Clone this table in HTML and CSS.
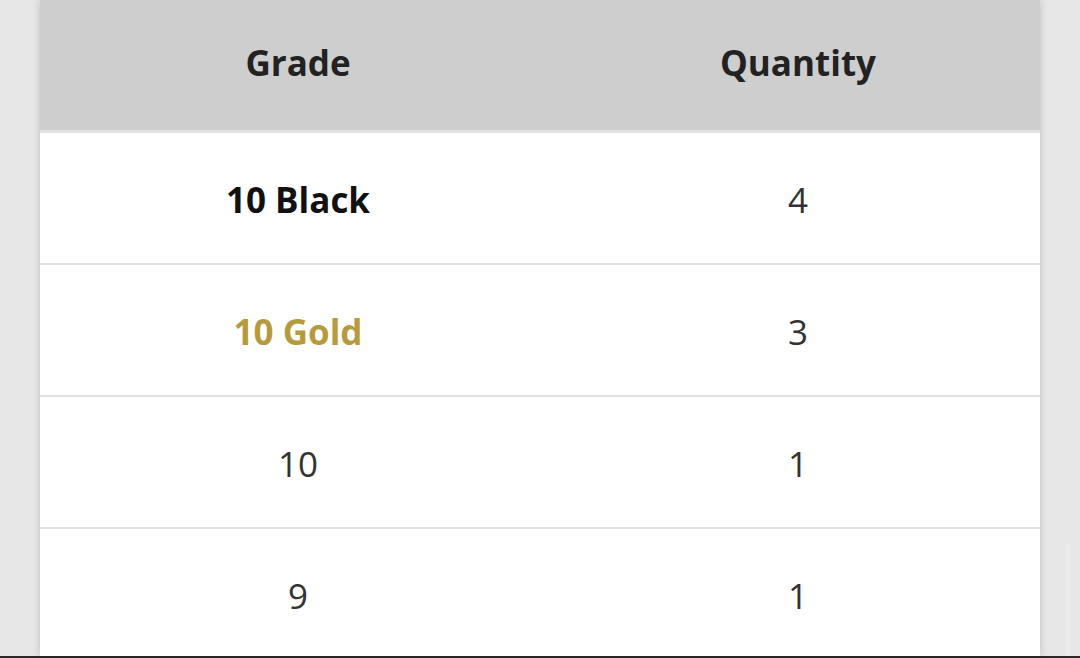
FILE: index.html
```html
<!DOCTYPE html>
<html>
<head>
<meta charset="utf-8">
<link rel="stylesheet" href="styles.css">
</head>
<body>
<div class="page">
  <div class="sheet">
    <table class="grades">
      <thead>
        <tr><th>Grade</th><th>Quantity</th></tr>
      </thead>
      <tbody>
        <tr><td class="black">10 Black</td><td>4</td></tr>
        <tr><td class="gold">10 Gold</td><td>3</td></tr>
        <tr><td>10</td><td>1</td></tr>
        <tr><td>9</td><td>1</td></tr>
      </tbody>
    </table>
  </div>
  <div class="scroll"></div>
</div>
</body>
</html>
```
FILE: styles.css
```css
html, body {
  margin: 0;
  padding: 0;
  height: 100%;
  overflow: hidden;
}
body {
  background: #e7e7e7;
  font-family: "Open Sans", "Liberation Sans", sans-serif;
}
.page {
  height: 656px;
  border-bottom: 2px solid #2a2a2a;
  display: flex;
  justify-content: center;
  position: relative;
}
.sheet {
  width: 1000px;
  background: #fff;
  box-shadow: 0 0 8px rgba(0,0,0,0.18);
  overflow: hidden;
}
.grades {
  width: 100%;
  border-collapse: collapse;
  table-layout: fixed;
}
.grades th {
  background: #cecece;
  height: 124px;
  padding: 0 0 6px 16px;
  font-size: 35px;
  font-weight: 700;
  color: #222;
  border-bottom: 3px solid #e2e2e2;
  text-align: center;
}
.grades td {
  height: 128px;
  padding: 2px 0 0 16px;
  font-size: 35px;
  color: #333;
  text-align: center;
  border-bottom: 2px solid #e0e0e0;
}
.grades td.black {
  font-weight: 700;
  color: #111;
}
.grades td.gold {
  font-weight: 700;
  color: #b69b3c;
}
.scroll {
  position: absolute;
  right: 10px;
  top: 544px;
  width: 4px;
  height: 112px;
  background: #ececec;
}
```
